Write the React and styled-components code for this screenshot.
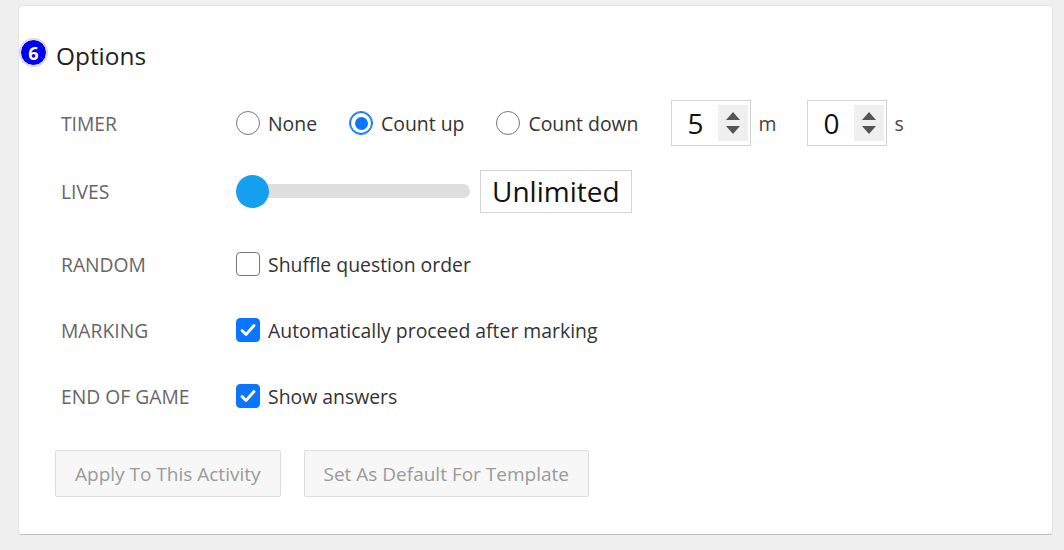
import React from 'react'
import styled, { createGlobalStyle } from 'styled-components'

const GlobalStyle = createGlobalStyle`
  html, body {
    margin: 0;
    padding: 0;
    background: #efefef;
    font-family: "Open Sans", "Noto Sans", sans-serif;
  }
`

const Page = styled.div`
  width: 1064px;
  height: 550px;
  padding: 5px 11px 0 18px;
  box-sizing: border-box;
`

const Card = styled.div`
  background: #fff;
  border: 1px solid #e4e4e4;
  border-bottom-color: #bdbdbd;
  border-radius: 4px;
  height: 530px;
  box-sizing: border-box;
  position: relative;
  padding: 0 0 0 36px;
`

const Heading = styled.h2`
  display: flex;
  align-items: center;
  margin: 0;
  padding: 34px 0 0 1px;
  font-size: 24.4px;
  font-weight: 400;
  color: #222;
  height: 30px;
`

const Badge = styled.span`
  position: absolute;
  left: 1px;
  top: 33px;
  width: 25px;
  height: 25px;
  border-radius: 50%;
  background: #0000f0;
  border: 1px solid #fff;
  box-shadow: 0 0 0 1px #d8d8d8;
  color: #fff;
  font-weight: 700;
  font-size: 18px;
  display: flex;
  align-items: center;
  justify-content: center;
  line-height: 1;
`

const Rows = styled.div`
  margin-top: 31px;
  display: flex;
  flex-direction: column;
`

const Row = styled.div`
  display: flex;
  align-items: center;
  height: 44px;
  margin-top: ${p => p.gap || 0}px;
`

const Label = styled.div`
  width: 175px;
  padding-left: 6px;
  font-size: 19.3px;
  color: #666;
  text-transform: uppercase;
  flex-shrink: 0;
`

const Controls = styled.div`
  display: flex;
  align-items: center;
`

const RadioLabel = styled.label`
  display: flex;
  align-items: center;
  font-size: 19.4px;
  color: #333;
  margin-right: ${p => (p.last ? 33 : 32)}px;
`

const RadioCircle = styled.span`
  width: 24px;
  height: 24px;
  border-radius: 50%;
  border: 1px solid ${p => (p.on ? '#0a75ff' : '#777')};
  box-sizing: border-box;
  margin-right: 8px;
  display: flex;
  align-items: center;
  justify-content: center;
  box-shadow: ${p => (p.on ? 'inset 0 0 0 1px #0a75ff' : 'none')};
  &::after {
    content: '';
    display: ${p => (p.on ? 'block' : 'none')};
    width: 13px;
    height: 13px;
    border-radius: 50%;
    background: #0a75ff;
  }
`

const Spinner = styled.div`
  display: flex;
  align-items: center;
  width: 80px;
  height: 46px;
  box-sizing: border-box;
  border: 1px solid #d4d4d4;
  padding: 3px 2px 3px 0;
`

const SpinValue = styled.span`
  flex: 1;
  text-align: center;
  font-size: 28px;
  color: #111;
`

const SpinArrows = styled.span`
  width: 30px;
  height: 36px;
  background: #efefef;
  display: flex;
  flex-direction: column;
  align-items: center;
  justify-content: center;
  gap: 6px;
`

const Unit = styled.span`
  font-size: 19.4px;
  color: #444;
  margin: 0 31px 0 7px;
`

const Track = styled.div`
  position: relative;
  width: 234px;
  height: 14px;
  border-radius: 7px;
  background: #dedede;
  margin-right: 10px;
`

const Thumb = styled.span`
  position: absolute;
  left: 0;
  top: 50%;
  width: 33px;
  height: 33px;
  margin-top: -16.5px;
  border-radius: 50%;
  background: #14a0ee;
`

const ValueBox = styled.div`
  height: 43px;
  box-sizing: border-box;
  border: 1px solid #d4d4d4;
  padding: 0 11px;
  display: flex;
  align-items: center;
  font-size: 28px;
  color: #111;
`

const CheckLabel = styled.label`
  display: flex;
  align-items: center;
  font-size: 19.4px;
  color: #333;
`

const Box = styled.span`
  width: 24px;
  height: 24px;
  box-sizing: border-box;
  border-radius: 4px;
  border: 1px solid ${p => (p.on ? '#0a75ff' : '#777')};
  background: ${p => (p.on ? '#0a75ff' : '#fff')};
  margin-right: 8px;
  display: flex;
  align-items: center;
  justify-content: center;
`

const Buttons = styled.div`
  display: flex;
  gap: 23px;
  margin-top: 32px;
`

const Button = styled.button`
  height: 47px;
  padding: 0 19px;
  font-family: inherit;
  font-size: 19px;
  color: #9a9a9a;
  background: #f7f7f7;
  border: 1px solid #dcdcdc;
  border-radius: 2px;
`

const Arrows = () => (
  <SpinArrows>
    <svg width="14" height="8" viewBox="0 0 14 8"><path d="M7 0L14 8H0z" fill="#555" /></svg>
    <svg width="14" height="8" viewBox="0 0 14 8"><path d="M0 0H14L7 8z" fill="#555" /></svg>
  </SpinArrows>
)

const Check = ({ on, children }) => (
  <CheckLabel>
    <Box on={on}>
      {on && (
        <svg width="16" height="14" viewBox="0 0 16 14">
          <path d="M2 7.5l4 4L14 2.5" fill="none" stroke="#fff" strokeWidth="2.8" strokeLinecap="round" strokeLinejoin="round" />
        </svg>
      )}
    </Box>
    {children}
  </CheckLabel>
)

const Radio = ({ on, last, children }) => (
  <RadioLabel last={last}>
    <RadioCircle on={on} />
    {children}
  </RadioLabel>
)

export default function App() {
  return (
    <Page>
      <GlobalStyle />
      <Card>
        <Badge>6</Badge>
        <Heading>Options</Heading>
        <Rows>
          <Row>
            <Label>Timer</Label>
            <Controls>
              <Radio>None</Radio>
              <Radio on>Count up</Radio>
              <Radio last>Count down</Radio>
              <Spinner><SpinValue>5</SpinValue><Arrows /></Spinner>
              <Unit>m</Unit>
              <Spinner><SpinValue>0</SpinValue><Arrows /></Spinner>
              <Unit>s</Unit>
            </Controls>
          </Row>
          <Row gap={24}>
            <Label>Lives</Label>
            <Controls>
              <Track><Thumb /></Track>
              <ValueBox>Unlimited</ValueBox>
            </Controls>
          </Row>
          <Row gap={29}>
            <Label>Random</Label>
            <Check>Shuffle question order</Check>
          </Row>
          <Row gap={22}>
            <Label>Marking</Label>
            <Check on>Automatically proceed after marking</Check>
          </Row>
          <Row gap={22}>
            <Label>End of game</Label>
            <Check on>Show answers</Check>
          </Row>
        </Rows>
        <Buttons>
          <Button>Apply To This Activity</Button>
          <Button>Set As Default For Template</Button>
        </Buttons>
      </Card>
    </Page>
  )
}
